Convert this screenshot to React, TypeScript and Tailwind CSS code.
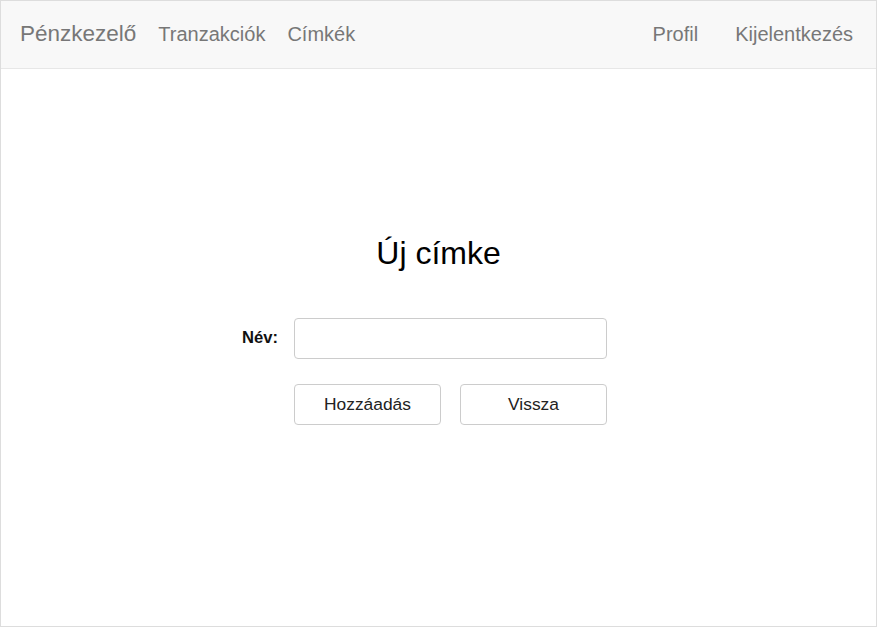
import React from "react";

export default function App() {
  return (
    <div className="w-[877px] h-[627px] border border-[#dddddd] bg-white font-['Liberation_Sans',Arial,sans-serif] overflow-hidden">
      <nav className="h-[68px] bg-[#f8f8f8] border-b border-[#e7e7e7] flex items-center pl-[19px] pr-[23px]">
        <div className="flex-1 flex items-baseline">
          <span className="text-[22.5px] text-[#777777] leading-none">Pénzkezelő</span>
          <span className="ml-[22px] text-[20px] text-[#777777] leading-none">Tranzakciók</span>
          <span className="ml-[22px] text-[20px] text-[#777777] leading-none">Címkék</span>
          <div className="flex-1" />
          <span className="text-[20px] text-[#777777] leading-none">Profil</span>
          <span className="ml-[37px] text-[20px] text-[#777777] leading-none">Kijelentkezés</span>
        </div>
      </nav>
      <main className="pt-[164px]">
        <h1 className="text-center text-[32px] leading-[40px] text-black">Új címke</h1>
        <div className="mt-[45px] pl-[225px]">
          <div className="flex items-center">
            <label className="w-[52px] text-right font-bold text-[16.6px] text-[#111]">Név:</label>
            <input type="text" className="ml-[16px] w-[313px] h-[41px] border border-[#cccccc] rounded-[4px] bg-white outline-none px-3" />
          </div>
          <div className="flex mt-[25px] ml-[68px]">
            <button className="w-[147px] h-[41px] border border-[#cccccc] rounded-[4px] bg-white text-[17.4px] text-[#222]">Hozzáadás</button>
            <button className="ml-[19px] w-[147px] h-[41px] border border-[#cccccc] rounded-[4px] bg-white text-[17.4px] text-[#222]">Vissza</button>
          </div>
        </div>
      </main>
    </div>
  );
}
